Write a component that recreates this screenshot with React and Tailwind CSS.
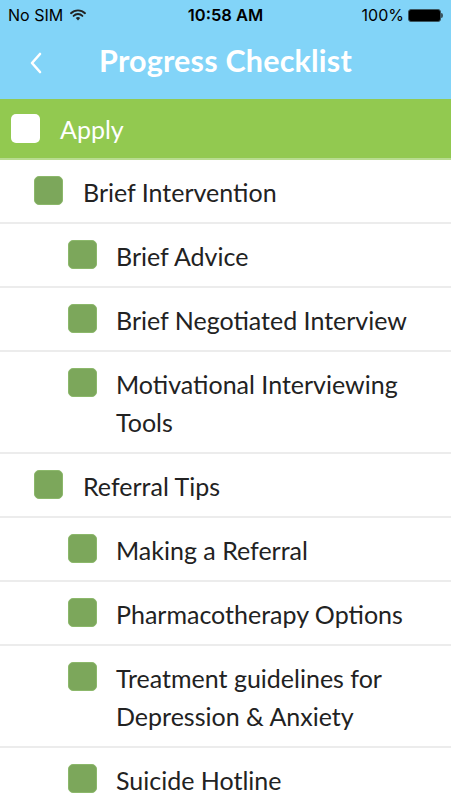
const items = [
  { label: "Brief Intervention", level: 1 },
  { label: "Brief Advice", level: 2 },
  { label: "Brief Negotiated Interview", level: 2 },
  { label: "Motivational Interviewing Tools", level: 2 },
  { label: "Referral Tips", level: 1 },
  { label: "Making a Referral", level: 2 },
  { label: "Pharmacotherapy Options", level: 2 },
  { label: "Treatment guidelines for Depression & Anxiety", level: 2 },
  { label: "Suicide Hotline", level: 2 },
];

const StatusBar = () => (
  <div className="flex items-center justify-between h-[30px] px-[8px] text-[16px] text-black font-['Inter',sans-serif]">
    <div className="flex items-center gap-[7px] w-[120px]">
      <span>No SIM</span>
      <svg width="16" height="12" viewBox="0 0 16 12">
        <path d="M1 4.2a10 10 0 0 1 14 0" stroke="#222" strokeWidth="1.9" fill="none" strokeLinecap="round" />
        <path d="M3.6 6.9a6.2 6.2 0 0 1 8.8 0" stroke="#222" strokeWidth="1.9" fill="none" strokeLinecap="round" />
        <path d="M8 11.5l-2.2-2.4a3.2 3.2 0 0 1 4.4 0z" fill="#222" />
      </svg>
    </div>
    <span className="font-semibold text-[16.5px]">10:58 AM</span>
    <div className="flex items-center justify-end gap-[4px] w-[120px]">
      <span>100%</span>
      <div className="flex items-center">
        <div className="w-[33px] h-[13px] rounded-[3px] bg-black border border-[#3b5560]" />
        <div className="w-[2px] h-[5px] bg-[#3b5560] rounded-r-sm" />
      </div>
    </div>
  </div>
);

const App = () => {
  return (
    <div className="w-[451px] h-[800px] overflow-hidden bg-white font-['Lato',sans-serif]">
      {/* Cabecera */}
      <div className="bg-[#82d4f8] h-[99px]">
        <StatusBar />
        <div className="relative flex items-center justify-center h-[64px] pb-[2px]">
          <svg className="absolute left-[28px] top-[22px]" width="16" height="22" viewBox="0 0 16 22">
            <path d="M12 2L4 11l8 9" stroke="white" strokeWidth="2.6" fill="none" strokeLinecap="round" strokeLinejoin="round" />
          </svg>
          <h1 className="text-white text-[30.5px] font-bold tracking-[0.2px]">Progress Checklist</h1>
        </div>
      </div>

      {/* Apply */}
      <div className="bg-[#92c950] h-[61px] flex items-center pl-[11px] gap-[20px] border-b-2 border-[#b8dc90]">
        <div className="w-[29px] h-[29px] rounded-[5px] bg-white" />
        <span className="text-white text-[25px] mt-[3px]">Apply</span>
      </div>

      {/* Lista */}
      <ul>
        {items.map((item) => (
          <li
            key={item.label}
            className={`flex items-start pt-[13px] pb-[11px] border-b-2 border-[#ececec] ${item.level === 1 ? "pl-[34px] gap-[20px]" : "pl-[68px] gap-[19px]"}`}
          >
            <div className="mt-[3px] shrink-0 w-[29px] h-[29px] rounded-[5px] bg-[#7ca75b] border border-[#8cb86b]" />
            <span className="text-[25px] leading-[38px] text-[#222] pr-[20px]">{item.label}</span>
          </li>
        ))}
      </ul>
    </div>
  );
};

export default App;
